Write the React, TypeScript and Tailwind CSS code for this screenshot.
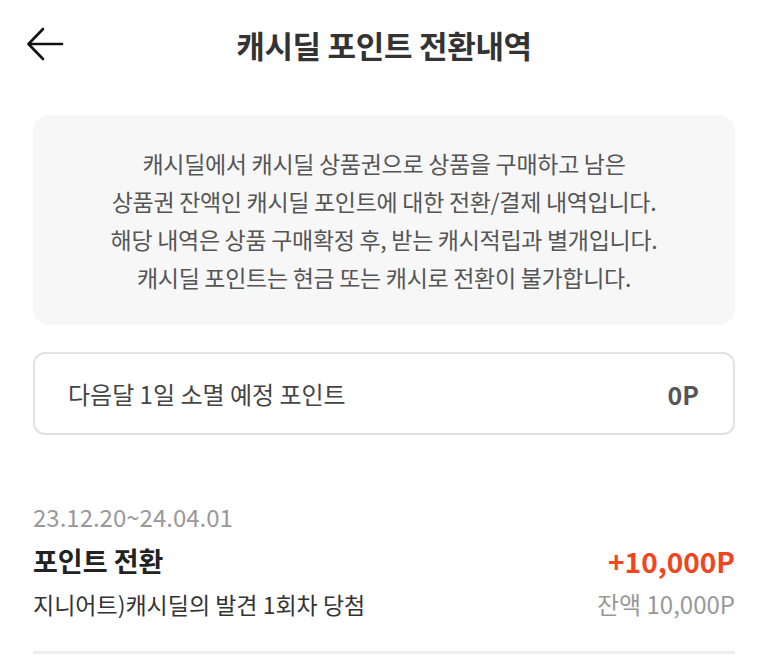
export default function App() {
  return (
    <div
      className="w-[768px] h-[670px] bg-white overflow-hidden"
      style={{ fontFamily: '"Noto Sans CJK KR", "Noto Sans", sans-serif' }}
    >
      {/* Header */}
      <header className="relative h-[90px] flex items-center justify-center">
        <button className="absolute left-[26px] top-[27px] w-[38px] h-[34px]">
          <svg viewBox="0 0 38 34" className="w-[38px] h-[34px]" fill="none" stroke="#111" strokeWidth="2.6" strokeLinecap="round" strokeLinejoin="round">
            <path d="M36 17H3" />
            <path d="M17 2L2.5 17L17 32" />
          </svg>
        </button>
        <h1 className="text-[31px] font-bold text-[#333] tracking-[-0.3px] leading-[40px]">캐시딜 포인트 전환내역</h1>
      </header>

      <div className="px-[33px]">
        {/* Notice */}
        <div className="mt-[25px] h-[210px] rounded-[16px] bg-[#f7f7f7] flex flex-col items-center justify-center text-center text-[23px] leading-[38px] text-[#555] tracking-[-0.3px]">
          <p>캐시딜에서 캐시딜 상품권으로 상품을 구매하고 남은</p>
          <p>상품권 잔액인 캐시딜 포인트에 대한 전환/결제 내역입니다.</p>
          <p>해당 내역은 상품 구매확정 후, 받는 캐시적립과 별개입니다.</p>
          <p>캐시딜 포인트는 현금 또는 캐시로 전환이 불가합니다.</p>
        </div>

        {/* Expiring points */}
        <div className="mt-[27px] h-[83px] rounded-[12px] border-2 border-[#e2e2e2] flex items-center justify-between pl-[33px] pr-[34px]">
          <span className="text-[24px] text-[#444] leading-[32px]">다음달 1일 소멸 예정 포인트</span>
          <span className="text-[25px] font-bold text-[#555] leading-[32px]">0P</span>
        </div>

        {/* History */}
        <div className="mt-[67px]">
          <div className="text-[24px] text-[#999] leading-[30px]">23.12.20~24.04.01</div>
          <div className="mt-[12px] flex items-center justify-between">
            <span className="text-[27px] font-bold text-[#222] leading-[34px]">포인트 전환</span>
            <span className="text-[28px] font-bold text-[#f0461e] leading-[34px]">+10,000P</span>
          </div>
          <div className="mt-[10px] flex items-center justify-between">
            <span className="text-[23px] text-[#333] leading-[32px]">지니어트)캐시딜의 발견 1회차 당첨</span>
            <span className="text-[24px] text-[#999] leading-[32px]">잔액 10,000P</span>
          </div>
          <div className="mt-[31px] h-[3px] bg-[#eeeeee]" />
        </div>
      </div>
    </div>
  );
}
